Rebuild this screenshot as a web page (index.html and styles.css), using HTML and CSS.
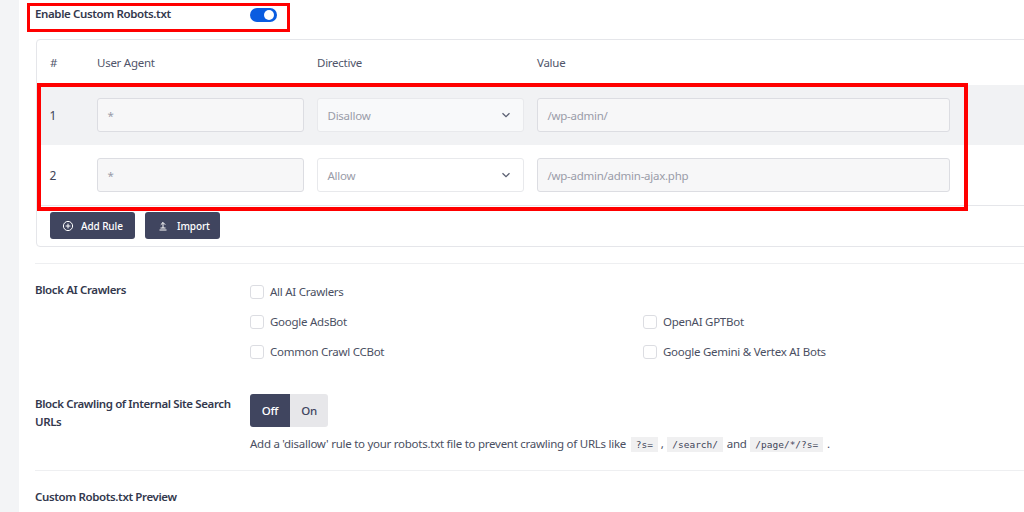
FILE: index.html
```html
<!DOCTYPE html>
<html lang="en">
<head>
<meta charset="utf-8">
<title>Custom Robots.txt</title>
<link rel="stylesheet" href="styles.css">
</head>
<body>
<main class="panel">
  <div class="enable-row">
    <span class="field-title">Enable Custom Robots.txt</span>
    <span class="switch"><span class="knob"></span></span>
  </div>
  <section class="card">
    <div class="row head">
      <span>#</span><span>User Agent</span><span>Directive</span><span>Value</span>
    </div>
    <div class="row shaded">
      <span class="num">1</span>
      <div class="input">*</div>
      <div class="select"><span>Disallow</span><svg class="chev" viewBox="0 0 10 6"><path d="M1.5 1.2 5 4.7l3.5-3.5"/></svg></div>
      <div class="input">/wp-admin/</div>
    </div>
    <div class="row">
      <span class="num">2</span>
      <div class="input">*</div>
      <div class="select"><span>Allow</span><svg class="chev" viewBox="0 0 10 6"><path d="M1.5 1.2 5 4.7l3.5-3.5"/></svg></div>
      <div class="input">/wp-admin/admin-ajax.php</div>
    </div>
    <div class="actions">
      <button class="btn add"><svg class="btn-icon" viewBox="0 0 12 12"><circle cx="6" cy="6" r="4.6"/><path d="M6 3.6v4.8M3.6 6h4.8"/></svg>Add Rule</button>
      <button class="btn import"><svg class="btn-icon" viewBox="0 0 12 12"><path d="M2.5 10h7M6 8V2.5M3.8 4.7 6 2.5l2.2 2.2M3.5 8h5"/></svg>Import</button>
    </div>
  </section>
  <hr class="rule first">
  <section class="setting crawlers">
    <h3 class="field-title">Block AI Crawlers</h3>
    <div class="checks">
      <label class="check wide"><span class="box"></span>All AI Crawlers</label>
      <label class="check"><span class="box"></span>Google AdsBot</label>
      <label class="check"><span class="box"></span>OpenAI GPTBot</label>
      <label class="check"><span class="box"></span>Common Crawl CCBot</label>
      <label class="check"><span class="box"></span>Google Gemini &amp; Vertex AI Bots</label>
    </div>
  </section>
  <section class="setting search">
    <h3 class="field-title">Block Crawling of Internal Site Search URLs</h3>
    <div>
      <div class="toggle"><span class="opt on">Off</span><span class="opt">On</span></div>
      <p class="help">Add a 'disallow' rule to your robots.txt file to prevent crawling of URLs like <code>?s=</code> , <code>/search/</code> and <code>/page/*/?s=</code> .</p>
    </div>
  </section>
  <hr class="rule second">
  <h3 class="field-title preview">Custom Robots.txt Preview</h3>
</main>
<div class="mark mark-top"></div>
<div class="mark mark-table"></div>
</body>
</html>
```
FILE: styles.css
```css
html, body { margin: 0; height: 512px; overflow: hidden; }
body { background: #f3f4f6; font-family: "Noto Sans", "Open Sans", sans-serif; color: #3f4458; position: relative; letter-spacing: -0.26px; }
.panel { margin-left: 19px; width: 1100px; height: 512px; background: #fff; padding: 0 0 0 16px; box-sizing: border-box; overflow: hidden; }
.field-title { font-size: 11.5px; font-weight: 600; color: #33384d; margin: 0; line-height: 18px; letter-spacing: -0.38px; }
.enable-row { display: flex; align-items: center; height: 39px; padding-bottom: 11px; box-sizing: border-box; }
.enable-row .field-title { width: 215px; }
.switch { width: 27px; height: 14px; border-radius: 7px; background: #0a5ce0; position: relative; margin-top: 1px; }
.knob { position: absolute; right: 3px; top: 2px; width: 10px; height: 10px; border-radius: 50%; background: #fff; }
.card { border: 1px solid #e5e6ea; border-radius: 4px; height: 208px; box-sizing: border-box; margin-left: 1px; }
.row { display: grid; grid-template-columns: 34px 207px 207px 413px; column-gap: 13px; align-items: center; height: 60px; padding-left: 13px; }
.row.head { height: 45px; font-size: 11.5px; color: #50556a; }
.row.shaded { background: #f1f2f4; }
.num { font-size: 12px; color: #3f4458; margin-left: -0.5px; }
.input, .select { height: 34px; box-sizing: border-box; border-radius: 3px; font-size: 11.5px; color: #9a9ca8; display: flex; align-items: center; padding: 0 9.5px; }
.input { background: #f7f7f8; border: 1px solid #dcdde2; }
.select { background: #fff; border: 1px solid #e8e9ec; justify-content: space-between; padding-right: 12px; }
.shaded .select { background: #f8f9fa; }
.chev { width: 10px; height: 6px; fill: none; stroke: #5b6072; stroke-width: 1.3; }
.actions { display: flex; gap: 10px; padding: 6px 0 0 13px; border-top: 1px solid #e5e6ea; }
.btn { height: 27px; border: 0; border-radius: 3px; background: #40455f; color: #fff; font: 500 10px "Noto Sans", sans-serif; letter-spacing: -0.1px; display: flex; align-items: center; padding: 0; }
.btn.add { width: 85px; padding-left: 12px; gap: 7px; }
.btn.import { width: 75px; padding-left: 12px; gap: 8px; }
.btn-icon { width: 12px; height: 12px; fill: none; stroke: #fff; stroke-width: 1; }
.rule { border: 0; border-top: 1px solid #eeeff1; margin: 0; }
.rule.first { margin-top: 16px; }
.setting { display: grid; grid-template-columns: 215px 1fr; }
.crawlers { height: 116px; padding-top: 17px; box-sizing: border-box; }
.checks { display: grid; grid-template-columns: 393px 1fr; grid-auto-rows: 18px; row-gap: 12px; align-content: start; width: 780px; margin-top: 2px; }
.check { display: flex; align-items: center; gap: 6px; font-size: 11.5px; line-height: 18px; color: #4a4f62; height: 18px; }
.check.wide { grid-column: 1 / -1; }
.box { width: 12px; height: 12px; border: 1px solid #dcdde2; border-radius: 3px; background: #fff; }
.search { height: 90px; padding-top: 14px; box-sizing: border-box; }
.search .field-title { padding-top: 1px; }
.toggle { display: inline-flex; height: 33px; border-radius: 3px; overflow: hidden; }
.opt { width: 38px; display: flex; align-items: center; justify-content: center; font-size: 11.5px; font-weight: 500; background: #e7e7ea; color: #40455f; }
.opt.on { width: 40px; background: #40455f; color: #fff; }
.help { margin: 8px 0 0; font-size: 11.5px; line-height: 18px; color: #4a4f62; white-space: nowrap; }
code { font-family: "DejaVu Sans Mono", monospace; font-size: 9.5px; letter-spacing: 0; background: #f0f0f1; padding: 2px 5px; margin: 0 1px; color: #3f4458; }
code:first-of-type { margin: 0 0 0 2px; }
.preview { margin-top: 17px; }
.mark { position: absolute; box-sizing: border-box; border-style: solid; border-color: #f00; }
.mark-top { left: 27px; top: 3px; width: 263px; height: 29px; border-width: 3px; }
.mark-table { left: 37px; top: 83px; width: 931px; height: 128px; border-width: 4px; }
```
